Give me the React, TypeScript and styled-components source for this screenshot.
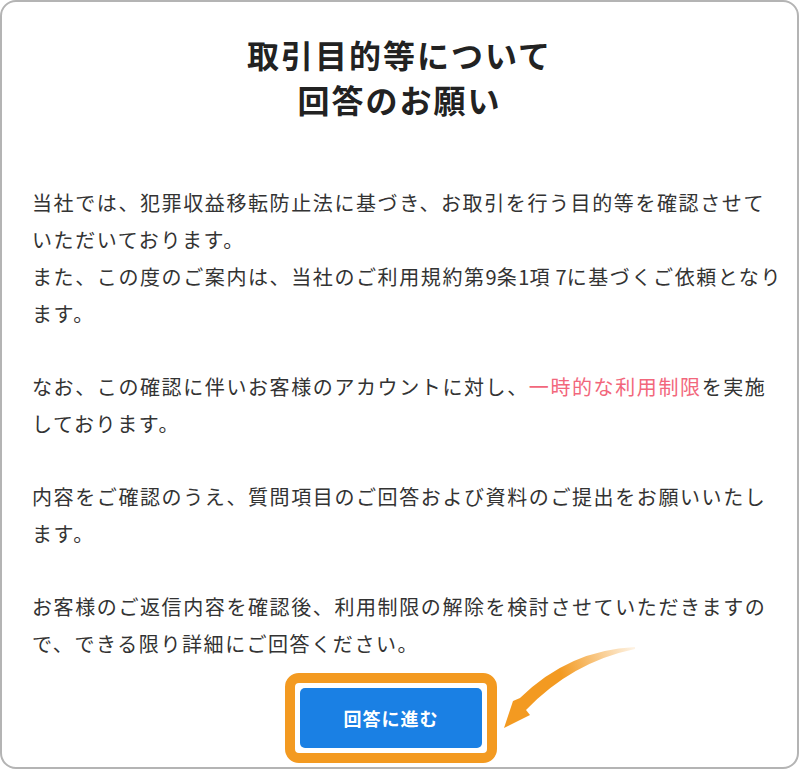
import React from 'react'
import styled, { createGlobalStyle } from 'styled-components'

const GlobalStyle = createGlobalStyle`
  html, body {
    margin: 0;
    padding: 0;
    background: #ffffff;
  }
  body {
    font-family: "Noto Sans CJK JP", "Noto Sans", sans-serif;
    color: #333333;
  }
`

const Card = styled.div`
  box-sizing: border-box;
  width: 799px;
  height: 769px;
  border: 2px solid #b4b4b4;
  border-radius: 16px;
  background: #ffffff;
  padding-top: 30px;
  display: flex;
  flex-direction: column;
`

const Title = styled.h1`
  margin: 0;
  text-align: center;
  font-size: 32px;
  line-height: 45px;
  font-weight: 700;
  letter-spacing: 2px;
  color: #222222;
`

const Body = styled.div`
  margin-top: 62px;
  padding: 0 0 0 30px;
  width: 752px;
  font-size: 20px;
  line-height: 37px;
  letter-spacing: 1.6px;
`

const Paragraph = styled.p`
  margin: 0 0 36px;

  &:last-child {
    margin-bottom: 0;
  }
`

// half-width digits sit tighter than the kana around them
const Num = styled.span`
  letter-spacing: 0;
`

const Alert = styled.span`
  color: #f2677c;
`

const ButtonRow = styled.div`
  margin-top: 11px;
  display: flex;
  justify-content: center;
  padding-right: 17px;
`

const Highlight = styled.div`
  position: relative;
  border: 10px solid #f39a21;
  border-radius: 14px;
  padding: 5px;
  background: #ffffff;
`

const NextButton = styled.button`
  display: block;
  width: 182px;
  height: 60px;
  border: none;
  border-radius: 5px;
  background: #1a80e4;
  color: #ffffff;
  font-family: inherit;
  font-size: 18px;
  font-weight: 700;
  letter-spacing: 1px;
  cursor: pointer;
`

const Arrow = styled.svg`
  position: absolute;
  left: 195px;
  top: -60px;
  width: 150px;
  height: 110px;
  overflow: visible;
  pointer-events: none;
`

const PointerArrow = () => (
  <Arrow viewBox="486 611 150 110">
    <defs>
      <linearGradient id="arrowFade" gradientUnits="userSpaceOnUse" x1="632" y1="636" x2="556" y2="660">
        <stop offset="0" stopColor="#f39a21" stopOpacity="0.1" />
        <stop offset="1" stopColor="#f39a21" stopOpacity="1" />
      </linearGradient>
    </defs>
    <path
      d="M631 635 Q565 638 516 686 L509 689 L500 716 L526 703 L522 698 Q568 650 631 637 Z"
      fill="url(#arrowFade)"
    />
  </Arrow>
)

export default function App() {
  return (
    <>
      <GlobalStyle />
      <Card>
        <Title>
          取引目的等について
          <br />
          回答のお願い
        </Title>
        <Body>
          <Paragraph>
            当社では、犯罪収益移転防止法に基づき、お取引を行う目的等を確認させていただいております。
            <br />
            また、この度のご案内は、当社のご利用規約第<Num>9</Num>条<Num>1</Num>項<Num> 7</Num>に基づくご依頼となります。
          </Paragraph>
          <Paragraph>
            なお、この確認に伴いお客様のアカウントに対し、<Alert>一時的な利用制限</Alert>を実施しております。
          </Paragraph>
          <Paragraph>
            内容をご確認のうえ、質問項目のご回答および資料のご提出をお願いいたします。
          </Paragraph>
          <Paragraph>
            お客様のご返信内容を確認後、利用制限の解除を検討させていただきますので、できる限り詳細にご回答ください。
          </Paragraph>
        </Body>
        <ButtonRow>
          <Highlight>
            <NextButton type="button">回答に進む</NextButton>
            <PointerArrow />
          </Highlight>
        </ButtonRow>
      </Card>
    </>
  )
}
